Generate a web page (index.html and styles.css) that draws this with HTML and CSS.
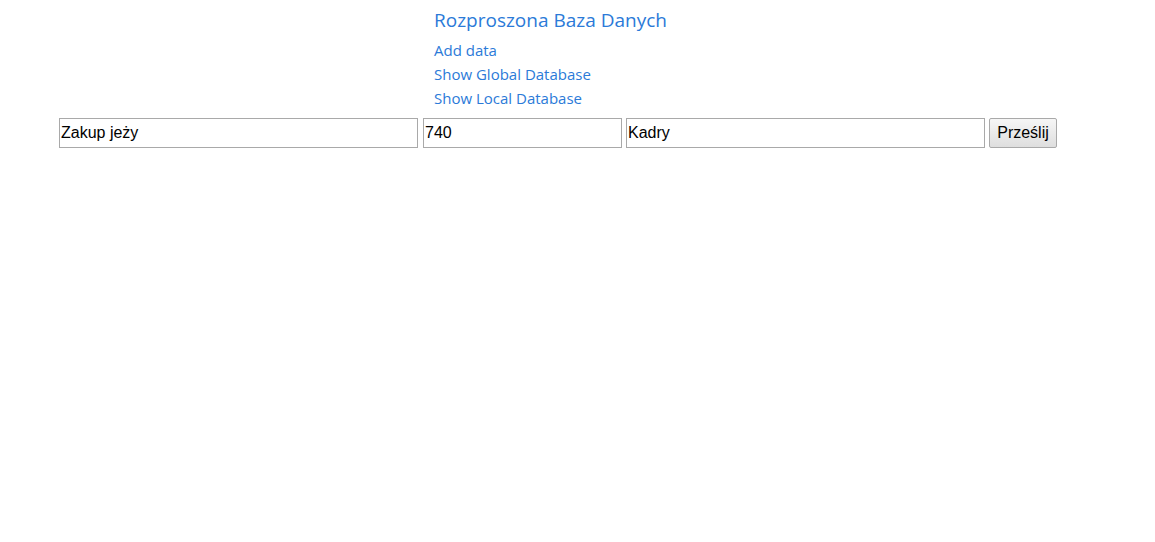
FILE: index.html
```html
<!DOCTYPE html>
<html lang="pl">
<head>
<meta charset="utf-8">
<title>Rozproszona Baza Danych</title>
<link rel="stylesheet" href="styles.css">
</head>
<body>
<header class="nav">
  <a class="title" href="#">Rozproszona Baza Danych</a>
  <a class="link" href="#">Add data</a>
  <a class="link" href="#">Show Global Database</a>
  <a class="link" href="#">Show Local Database</a>
</header>
<form class="row">
  <input class="field wide" type="text" value="Zakup jeży">
  <input class="field narrow" type="text" value="740">
  <input class="field wide" type="text" value="Kadry">
  <button class="btn" type="button">Prześlij</button>
</form>
</body>
</html>
```
FILE: styles.css
```css
body {
  margin: 0;
  background: #fff;
  font-family: "Open Sans", "Noto Sans", sans-serif;
}
.nav {
  display: flex;
  flex-direction: column;
  align-items: flex-start;
  padding: 7px 0 0 434px;
}
.nav a {
  color: #2b7ad8;
  text-decoration: none;
}
.title {
  font-size: 19px;
  line-height: 26px;
  margin-bottom: 5px;
}
.link {
  font-size: 15px;
  line-height: 24px;
}
.row {
  display: flex;
  align-items: center;
  gap: 5px;
  margin: 0;
  padding: 8px 0 0 59px;
}
.field {
  box-sizing: border-box;
  height: 30px;
  margin: 0;
  padding: 1px 1px;
  border: 1px solid #a9a9a9;
  font-family: "Liberation Sans", Arial, sans-serif;
  font-size: 16px;
  color: #000;
  outline: none;
}
.wide { width: 359px; }
.narrow { width: 199px; margin-right: -1px; }
.btn {
  box-sizing: border-box;
  height: 30px;
  width: 68px;
  margin: 0 0 0 -1px;
  padding: 0 6px;
  border: 1px solid #a9a9a9;
  border-radius: 2px;
  background: linear-gradient(#f6f6f6, #dedede);
  font-family: "Liberation Sans", Arial, sans-serif;
  font-size: 16px;
  color: #000;
}
```
